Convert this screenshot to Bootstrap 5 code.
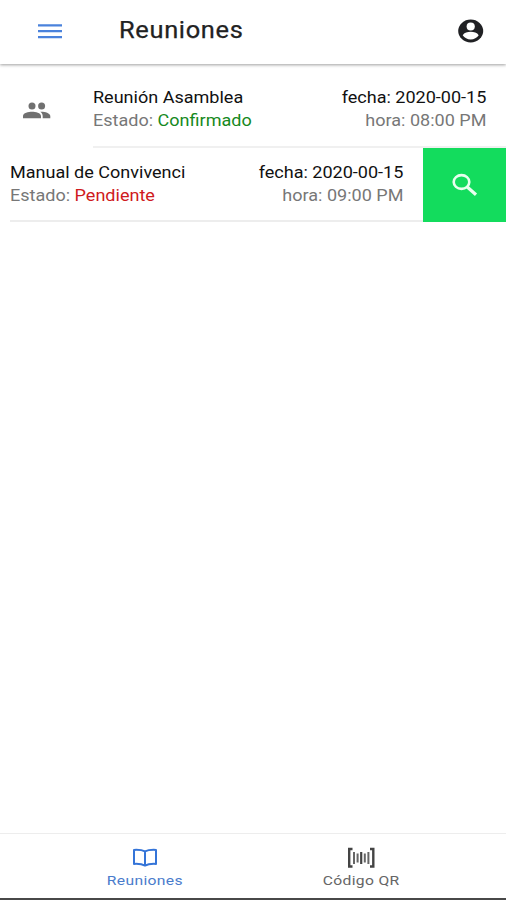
<!DOCTYPE html>
<html lang="es">
<head>
<meta charset="utf-8">
<meta name="viewport" content="width=device-width, initial-scale=1">
<title>Reuniones</title>
<link href="https://cdn.jsdelivr.net/npm/bootstrap@5.3.0/dist/css/bootstrap.min.css" rel="stylesheet">
<style>
body{font-family:Roboto,"Liberation Sans",sans-serif;color:#111;background:#fff;height:900px;overflow:hidden}
svg{display:block;flex:none}
.topbar{height:64px;padding:0 22px 2px 37px;box-shadow:0 1px 3px rgba(0,0,0,.38)}
.title{font-size:23px;font-weight:400;-webkit-text-stroke:.25px #222;letter-spacing:.6px;line-height:28px;margin:0 0 0 56px;color:#222;transform:scaleX(1.105);transform-origin:left}
.meeting{font-size:16px;line-height:23px}
.wide-start{transform:scaleX(1.127);transform-origin:left}
.wide-end{transform:scaleX(1.127);transform-origin:right}
.first{height:84px;padding-left:23px}
.people{margin-top:37px}
.first .info{margin-left:42px;padding:22px 20px 0 0;border-bottom:2px solid #f0f0f0}
.second{height:74px;padding-left:10px}
.second .info{padding:13px 20px 0 0;border-bottom:2px solid #ededed}
.soft{color:#777}
.ok{color:#16891d}
.pending{color:#cf1a20}
.action{width:83px;background:#13dc5d;padding:0 0 1px 28px}
.tabs{height:67px;border-top:1px solid #ededed;border-bottom:2px solid #484848;font-size:13.5px;letter-spacing:.3px;line-height:16px;padding:13px 37px 0}
.tab-link{width:216px;color:#666}
.tab-link.on{color:#4a7ccc}
.tab-link svg{margin-bottom:4px}
.tab-link span{transform:scaleX(1.16)}
</style>
</head>
<body class="d-flex flex-column">
<header class="topbar d-flex align-items-center">
  <svg width="26" height="18" viewBox="0 0 26 18" stroke="#4a82dc" stroke-width="2.300"><path d="M1 3.300h24M1 9.200h24M1 15.100h24"/></svg>
  <h1 class="title">Reuniones</h1>
  <svg class="ms-auto" width="26" height="26" viewBox="0 0 26 26"><ellipse cx="12.700" cy="13" rx="12.500" ry="11.400" fill="#202124"/><circle cx="12.700" cy="8.500" r="4.100" fill="#fff"/><path d="M4.700 17.200c1.400-2.400 5-3.400 8-3.400s6.600 1 8 3.400c-1.700 2.600-4.700 4.200-8 4.200s-6.300-1.600-8-4.200z" fill="#fff"/></svg>
</header>
<main class="flex-grow-1">
  <section class="meeting first d-flex">
    <svg class="people" width="28" height="18" viewBox="0 0 28 18" fill="#707070"><circle cx="9" cy="5" r="3.500"/><circle cx="18.600" cy="5" r="3.500"/><path d="M0 17.200V15c0-3 5.500-4.300 9-4.300s9 1.300 9 4.300v2.200zM18.500 10.800c3.500 0 8.800 1.500 8.800 4.200v2.200h-7.600V15c0-1.900-1-3.200-2.400-4.200z"/></svg>
    <div class="info d-flex justify-content-between flex-grow-1">
      <div class="wide-start"><div>Reunión Asamblea</div><div class="soft">Estado: <span class="ok">Confirmado</span></div></div>
      <div class="wide-end text-end"><div>fecha: 2020-00-15</div><div class="soft">hora: 08:00 PM</div></div>
    </div>
  </section>
  <section class="meeting second d-flex">
    <div class="info d-flex justify-content-between flex-grow-1">
      <div class="wide-start"><div>Manual de Convivenci</div><div class="soft">Estado: <span class="pending">Pendiente</span></div></div>
      <div class="wide-end text-end"><div>fecha: 2020-00-15</div><div class="soft">hora: 09:00 PM</div></div>
    </div>
    <div class="action d-flex align-items-center">
      <svg width="28" height="24" viewBox="0 0 28 24" fill="none" stroke="#e8ffee" stroke-width="2.600"><ellipse cx="10.500" cy="9" rx="7.800" ry="6.900"/><path d="M16 13.700l9 8" stroke-width="3.200"/></svg>
    </div>
  </section>
</main>
<nav class="tabs d-flex">
  <div class="tab-link on d-flex flex-column align-items-center">
    <svg width="26" height="21" viewBox="0 0 26 21" fill="none" stroke="#3474d8" stroke-width="2" stroke-linejoin="round"><path d="M13 4.400C10 2.900 6 2.700 2 2.900v14c4-.2 8 0 11 1.700 3-1.700 7-1.900 11-1.700v-14c-4-.2-8 0-11 1.500zM13 4.400v14"/></svg>
    <span>Reuniones</span>
  </div>
  <div class="tab-link d-flex flex-column align-items-center">
    <svg width="28" height="21" viewBox="0 0 28 21" fill="none" stroke="#444"><path stroke-width="2.400" d="M5.500 2H2.200v17.500h3.300M23 2h3.300v17.500H23"/><path stroke-width="2" stroke="#666" d="M7 5v12M10.600 6.500v9M17.800 6.500v9M21.400 5v12"/><path stroke-width="2.200" d="M14.200 5v12"/></svg>
    <span>Código QR</span>
  </div>
</nav>
<script src="https://cdn.jsdelivr.net/npm/bootstrap@5.3.0/dist/js/bootstrap.bundle.min.js"></script>
</body>
</html>
